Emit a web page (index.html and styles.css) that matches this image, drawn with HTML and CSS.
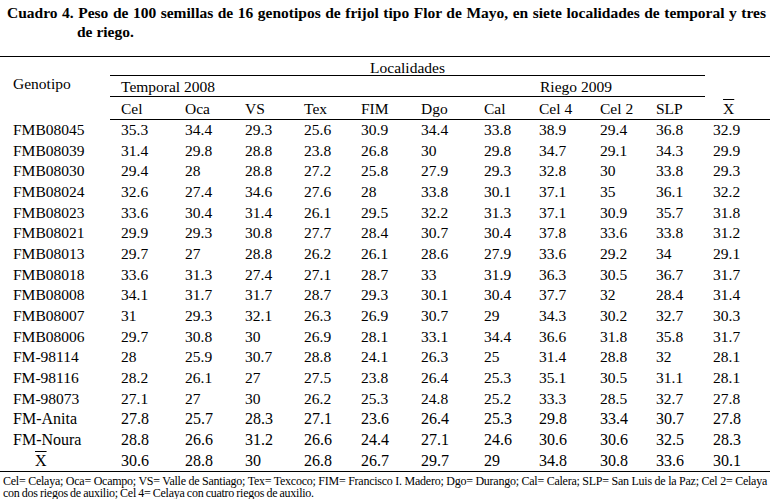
FILE: index.html
```html
<!DOCTYPE html>
<html lang="es">
<head>
<meta charset="utf-8">
<title>Cuadro 4</title>
<link rel="stylesheet" href="styles.css">
</head>
<body>
<div class="page">
  <p class="title">Cuadro 4. Peso de 100 semillas de 16 genotipos de frijol tipo Flor de Mayo, en siete localidades de temporal y tres de riego.</p>
  <table class="data">
    <colgroup>
      <col class="c-gen"><col class="c64"><col class="c60"><col class="c59"><col class="c57"><col class="c60"><col class="c63"><col class="c55"><col class="c61"><col class="c56"><col class="c60"><col class="c65">
    </colgroup>
    <thead>
      <tr class="h1">
        <th class="gen" rowspan="3">Genotipo</th>
        <th class="loc" colspan="10">Localidades</th>
        <th class="blank" rowspan="2"></th>
      </tr>
      <tr class="h2">
        <th class="grp" colspan="6">Temporal 2008</th>
        <th class="grp riego" colspan="4">Riego 2009</th>
      </tr>
      <tr class="h3">
        <th>Cel</th><th>Oca</th><th>VS</th><th>Tex</th><th>FIM</th><th>Dgo</th><th>Cal</th><th>Cel 4</th><th>Cel 2</th><th>SLP</th><th class="meanh"><span class="xbar">X</span></th>
      </tr>
    </thead>
    <tbody>
      <tr><td class="g">FMB08045</td><td>35.3</td><td>34.4</td><td>29.3</td><td>25.6</td><td>30.9</td><td>34.4</td><td>33.8</td><td>38.9</td><td>29.4</td><td>36.8</td><td>32.9</td></tr>
      <tr><td class="g">FMB08039</td><td>31.4</td><td>29.8</td><td>28.8</td><td>23.8</td><td>26.8</td><td>30</td><td>29.8</td><td>34.7</td><td>29.1</td><td>34.3</td><td>29.9</td></tr>
      <tr><td class="g">FMB08030</td><td>29.4</td><td>28</td><td>28.8</td><td>27.2</td><td>25.8</td><td>27.9</td><td>29.3</td><td>32.8</td><td>30</td><td>33.8</td><td>29.3</td></tr>
      <tr><td class="g">FMB08024</td><td>32.6</td><td>27.4</td><td>34.6</td><td>27.6</td><td>28</td><td>33.8</td><td>30.1</td><td>37.1</td><td>35</td><td>36.1</td><td>32.2</td></tr>
      <tr><td class="g">FMB08023</td><td>33.6</td><td>30.4</td><td>31.4</td><td>26.1</td><td>29.5</td><td>32.2</td><td>31.3</td><td>37.1</td><td>30.9</td><td>35.7</td><td>31.8</td></tr>
      <tr><td class="g">FMB08021</td><td>29.9</td><td>29.3</td><td>30.8</td><td>27.7</td><td>28.4</td><td>30.7</td><td>30.4</td><td>37.8</td><td>33.6</td><td>33.8</td><td>31.2</td></tr>
      <tr><td class="g">FMB08013</td><td>29.7</td><td>27</td><td>28.8</td><td>26.2</td><td>26.1</td><td>28.6</td><td>27.9</td><td>33.6</td><td>29.2</td><td>34</td><td>29.1</td></tr>
      <tr><td class="g">FMB08018</td><td>33.6</td><td>31.3</td><td>27.4</td><td>27.1</td><td>28.7</td><td>33</td><td>31.9</td><td>36.3</td><td>30.5</td><td>36.7</td><td>31.7</td></tr>
      <tr><td class="g">FMB08008</td><td>34.1</td><td>31.7</td><td>31.7</td><td>28.7</td><td>29.3</td><td>30.1</td><td>30.4</td><td>37.7</td><td>32</td><td>28.4</td><td>31.4</td></tr>
      <tr><td class="g">FMB08007</td><td>31</td><td>29.3</td><td>32.1</td><td>26.3</td><td>26.9</td><td>30.7</td><td>29</td><td>34.3</td><td>30.2</td><td>32.7</td><td>30.3</td></tr>
      <tr><td class="g">FMB08006</td><td>29.7</td><td>30.8</td><td>30</td><td>26.9</td><td>28.1</td><td>33.1</td><td>34.4</td><td>36.6</td><td>31.8</td><td>35.8</td><td>31.7</td></tr>
      <tr><td class="g">FM-98114</td><td>28</td><td>25.9</td><td>30.7</td><td>28.8</td><td>24.1</td><td>26.3</td><td>25</td><td>31.4</td><td>28.8</td><td>32</td><td>28.1</td></tr>
      <tr><td class="g">FM-98116</td><td>28.2</td><td>26.1</td><td>27</td><td>27.5</td><td>23.8</td><td>26.4</td><td>25.3</td><td>35.1</td><td>30.5</td><td>31.1</td><td>28.1</td></tr>
      <tr><td class="g">FM-98073</td><td>27.1</td><td>27</td><td>30</td><td>26.2</td><td>25.3</td><td>24.8</td><td>25.2</td><td>33.3</td><td>28.5</td><td>32.7</td><td>27.8</td></tr>
      <tr class="big"><td class="g">FM-Anita</td><td>27.8</td><td>25.7</td><td>28.3</td><td>27.1</td><td>23.6</td><td>26.4</td><td>25.3</td><td>29.8</td><td>33.4</td><td>30.7</td><td>27.8</td></tr>
      <tr class="big"><td class="g">FM-Noura</td><td>28.8</td><td>26.6</td><td>31.2</td><td>26.6</td><td>24.4</td><td>27.1</td><td>24.6</td><td>30.6</td><td>30.6</td><td>32.5</td><td>28.3</td></tr>
      <tr class="big last"><td class="g meanrow"><span class="xbar">X</span></td><td>30.6</td><td>28.8</td><td>30</td><td>26.8</td><td>26.7</td><td>29.7</td><td>29</td><td>34.8</td><td>30.8</td><td>33.6</td><td>30.1</td></tr>
    </tbody>
  </table>
  <p class="note">Cel= Celaya; Oca= Ocampo; VS= Valle de Santiago; Tex= Texcoco; FIM= Francisco I. Madero; Dgo= Durango; Cal= Calera; SLP= San Luis de la Paz; Cel 2= Celaya con dos riegos de auxilio; Cel 4= Celaya con cuatro riegos de auxilio.</p>
</div>
</body>
</html>
```

FILE: styles.css
```css
html, body {
  margin: 0;
  padding: 0;
  background: #fff;
}

body {
  font-family: "Liberation Serif", "Times New Roman", serif;
  color: #000;
}

.page {
  width: 770px;
}

.title {
  margin: 0;
  padding: 3px 4px 0 77px;
  text-indent: -70px;
  font-size: 15.5px;
  font-weight: bold;
  line-height: 19px;
  text-align: justify;
  height: 56px;
  box-sizing: border-box;
}

.data {
  width: 770px;
  border-collapse: collapse;
  table-layout: fixed;
  font-size: 15.5px;
}

.c-gen { width: 110px; }
.c64 { width: 64px; }
.c60 { width: 60px; }
.c59 { width: 59px; }
.c57 { width: 57px; }
.c63 { width: 63px; }
.c55 { width: 55px; }
.c61 { width: 61px; }
.c56 { width: 56px; }
.c65 { width: 65px; }

.data th,
.data td {
  padding: 0 0 0 11px;
  text-align: left;
  font-weight: normal;
  white-space: nowrap;
  line-height: 18px;
}

.data thead tr.h1 th {
  border-top: 1px solid #000;
}

.h1 { height: 19px; }
.h2 { height: 21px; }
.h3 { height: 23px; }

.data th.gen {
  padding-left: 13px;
  vertical-align: top;
  padding-top: 18px;
}

.data th.loc {
  text-align: center;
  padding-left: 0;
  border-bottom: 1px solid #000;
  vertical-align: bottom;
  line-height: 14px;
}

.data th.grp {
  border-bottom: 1px solid #000;
  vertical-align: bottom;
}

.data th.riego {
  padding-left: 67px;
}

.data tr.h3 th {
  border-bottom: 1px solid #000;
  vertical-align: bottom;
  padding-bottom: 1px;
}

.data th.meanh {
  padding-left: 18px;
}

.xbar {
  text-decoration: overline;
  text-decoration-thickness: 1px;
}

.data tbody tr {
  height: 20.7px;
}

.data td.g {
  padding-left: 13px;
}

.data td:last-child {
  padding-left: 8px;
}

.data tbody tr.big td {
  font-size: 16px;
}

.data td.meanrow {
  padding-left: 35px;
}

.data tr.last td {
  border-bottom: 1px solid #000;
}

.note {
  margin: 3px 0 0;
  padding: 0 3px 0 3px;
  font-size: 12px;
  line-height: 12px;
  letter-spacing: -0.25px;
  word-spacing: -0.5px;
  text-align: justify;
}
```
